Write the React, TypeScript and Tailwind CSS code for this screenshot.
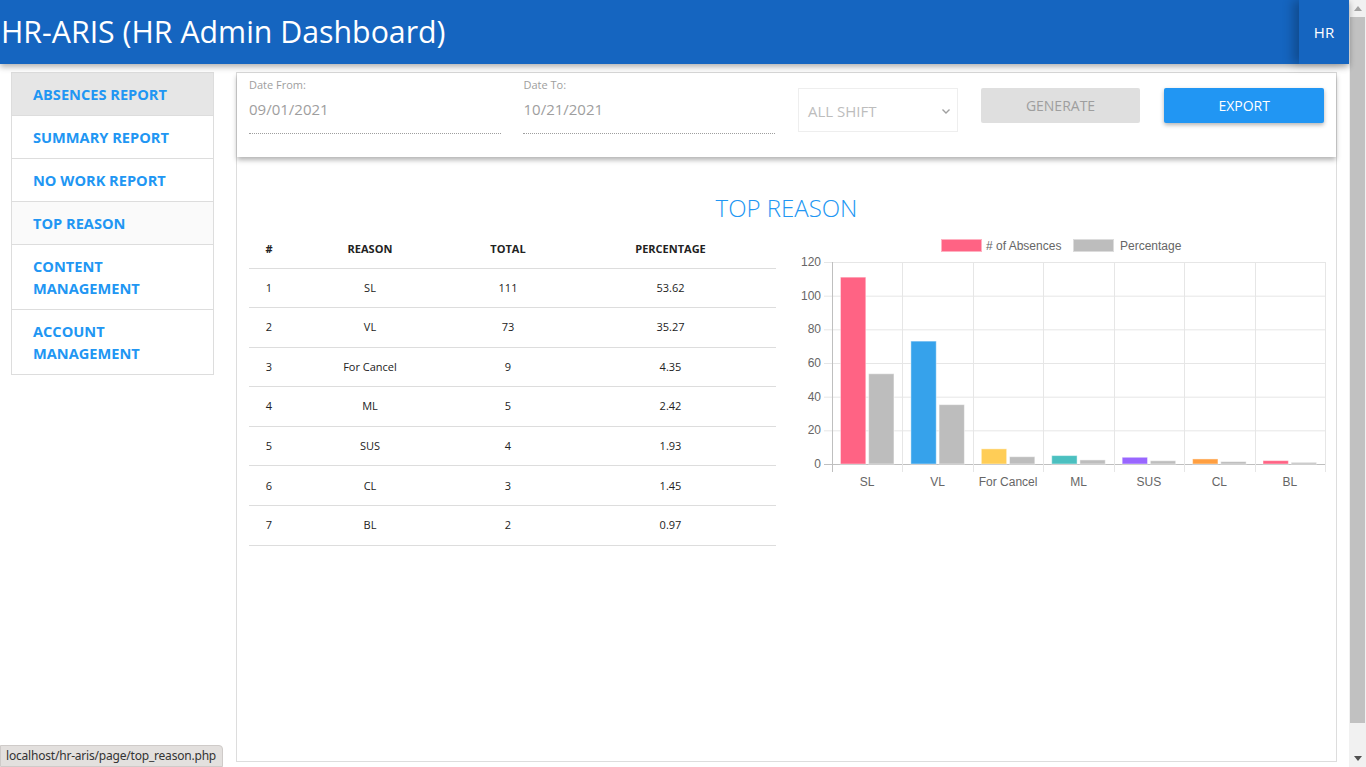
import React from "react";

const menu = [
  { label: "ABSENCES REPORT", bg: "bg-[#e6e6e6]" },
  { label: "SUMMARY REPORT", bg: "bg-white" },
  { label: "NO WORK REPORT", bg: "bg-white" },
  { label: "TOP REASON", bg: "bg-[#fafafa]" },
  { label: "CONTENT MANAGEMENT", bg: "bg-white", wrap: true },
  { label: "ACCOUNT MANAGEMENT", bg: "bg-white", wrap: true },
];

const rows = [
  { reason: "SL", total: 111, pct: 53.62, color: "#ff6384" },
  { reason: "VL", total: 73, pct: 35.27, color: "#36a2eb" },
  { reason: "For Cancel", total: 9, pct: 4.35, color: "#ffcd56" },
  { reason: "ML", total: 5, pct: 2.42, color: "#4bc0c0" },
  { reason: "SUS", total: 4, pct: 1.93, color: "#9966ff" },
  { reason: "CL", total: 3, pct: 1.45, color: "#ff9f40" },
  { reason: "BL", total: 2, pct: 0.97, color: "#ff6384" },
];

function BarChart() {
  // pixel coords copied from page, group shifted back by the svg offset
  const left = 832;
  const right = 1325;
  const top = 262;
  const bottom = 464;
  const cat = (right - left) / rows.length;
  const barW = cat * 0.8 * 0.5 * 0.9;
  const y = (v: number) => bottom - (v * (bottom - top)) / 120;
  const ticks = [0, 20, 40, 60, 80, 100, 120];

  return (
    <svg width={545} height={260} className="block">
      <g transform="translate(-790,-235)" fontFamily="'Liberation Sans', Arial, sans-serif" fontSize={12} fill="#666">
        {/* legend */}
        <rect x={941.5} y={239.5} width={40} height={12} fill="#ff6384" stroke="#ffb1c1" />
        <text x={986} y={249.5}>
          # of Absences
        </text>
        <rect x={1073.5} y={239.5} width={40} height={12} fill="#bdbdbd" stroke="#dcdcdc" />
        <text x={1120} y={249.5}>
          Percentage
        </text>

        {/* grid */}
        {ticks.map((t) => (
          <g key={t}>
            <line x1={824} x2={right} y1={y(t) + 0.5} y2={y(t) + 0.5} stroke={t === 0 ? "#bfbfbf" : "#e6e6e6"} />
            <text x={821} y={y(t) + 4} textAnchor="end">
              {t}
            </text>
          </g>
        ))}
        {rows.map((_, i) => (
          <line
            key={i}
            x1={Math.round(left + cat * i) + 0.5}
            x2={Math.round(left + cat * i) + 0.5}
            y1={top}
            y2={bottom + 8}
            stroke={i === 0 ? "#bfbfbf" : "#e6e6e6"}
          />
        ))}
        <line x1={right + 0.5} x2={right + 0.5} y1={top} y2={bottom + 8} stroke="#e6e6e6" />

        {/* bars */}
        {rows.map((r, i) => {
          const c = left + cat * (i + 0.5);
          const x1 = c - cat * 0.2 - barW / 2;
          const x2 = c + cat * 0.2 - barW / 2;
          return (
            <g key={r.reason}>
              <rect x={x1} y={y(r.total)} width={barW} height={bottom - y(r.total)} fill={r.color} stroke="rgba(255,255,255,0.45)" />
              <rect x={x2} y={y(r.pct)} width={barW} height={bottom - y(r.pct)} fill="#bdbdbd" stroke="rgba(255,255,255,0.5)" />
              <text x={c} y={486} textAnchor="middle">
                {r.reason}
              </text>
            </g>
          );
        })}
      </g>
    </svg>
  );
}

export default function App() {
  return (
    <div className="flex h-[767px] w-[1366px] overflow-hidden bg-white font-['Open_Sans',_'Noto_Sans',_sans-serif]">
      <div className="relative flex w-[1349px] flex-col">
        <header className="relative z-10 flex h-16 shrink-0 items-center justify-between bg-[#1565c0] shadow-[0_3px_6px_rgba(0,0,0,0.3)]">
          <h1 className="pl-[1px] pt-[1px] text-[30.3px] leading-none text-white">HR-ARIS (HR Admin Dashboard)</h1>
          <button className="flex h-16 w-[50px] items-center justify-center bg-[#1565c0] text-[15px] text-white shadow-[-6px_0_10px_rgba(0,0,0,0.25)]">
            HR
          </button>
        </header>

        <div className="flex flex-1 pb-[5px] pl-[11px] pt-2">
          <nav className="w-[203px] self-start border border-[#dddddd]">
            {menu.map((m, i) => (
              <div
                key={m.label}
                className={`${m.bg} ${i > 0 ? "border-t border-[#dddddd]" : ""} ${
                  m.wrap ? "py-[10px] pr-12" : "py-[10px]"
                } pl-[21px] text-[14.6px] font-bold leading-[22px] text-[#2196f3]`}
              >
                {m.label}
              </div>
            ))}
          </nav>

          <main className="ml-[22px] flex w-[1101px] flex-col border border-[#dddddd]">
            <div className="relative z-[1] flex h-[84px] shrink-0 items-start bg-white px-3 pt-[5px] shadow-[0_3px_5px_rgba(0,0,0,0.3)]">
              <div className="w-[253px]">
                <div className="text-[11px] leading-[14px] text-[#9e9e9e]">Date From:</div>
                <div className="flex h-[42px] items-center border-b border-dotted border-[#9e9e9e] pb-[6px] text-[15px] text-[#9e9e9e]">
                  09/01/2021
                </div>
              </div>
              <div className="ml-[22px] w-[252px]">
                <div className="text-[11px] leading-[14px] text-[#9e9e9e]">Date To:</div>
                <div className="flex h-[42px] items-center border-b border-dotted border-[#9e9e9e] pb-[6px] text-[15px] text-[#9e9e9e]">
                  10/21/2021
                </div>
              </div>
              <div className="ml-[23px] mt-[10px] flex h-[44px] w-[160px] items-center justify-between border border-[#eeeeee] pl-[9px] pr-[5px] text-[15px] text-[#bdbdbd]">
                <span className="pt-[2px]">ALL SHIFT</span>
                <svg width="12" height="12" viewBox="0 0 12 12" className="mt-[2px]">
                  <path d="M2.5 4.5 6 8 9.5 4.5" fill="none" stroke="#a0a0a0" strokeWidth="1.4" />
                </svg>
              </div>
              <button className="ml-[23px] mt-[10px] h-[35px] w-[160px] rounded-[2px] bg-[#dfdfdf] text-[14px] text-[#9e9e9e]">
                GENERATE
              </button>
              <button className="ml-[24px] mt-[10px] h-[35px] w-[160px] rounded-[2px] bg-[#2196f3] text-[14px] text-white shadow-[0_2px_4px_rgba(0,0,0,0.3)]">
                EXPORT
              </button>
            </div>

            <h2 className="mt-[35px] text-center text-[24px] font-light leading-[32px] text-[#2196f3]">TOP REASON</h2>

            <div className="mt-[6px] flex px-3">
              <table className="mt-[1px] w-[527px] table-fixed border-collapse self-start text-[11px] text-[#222]">
                <colgroup>
                  <col className="w-[40px]" />
                  <col className="w-[162px]" />
                  <col className="w-[114px]" />
                  <col className="w-[211px]" />
                </colgroup>
                <thead>
                  <tr className="h-[37px] border-b border-[#dddddd]">
                    <th className="text-center font-bold">#</th>
                    <th className="text-center font-bold">REASON</th>
                    <th className="text-center font-bold">TOTAL</th>
                    <th className="text-center font-bold">PERCENTAGE</th>
                  </tr>
                </thead>
                <tbody>
                  {rows.map((r, i) => (
                    <tr key={r.reason} className="h-[39.6px] border-b border-[#dddddd]">
                      <td className="text-center">{i + 1}</td>
                      <td className="text-center">{r.reason}</td>
                      <td className="text-center">{r.total}</td>
                      <td className="text-center">{r.pct.toFixed(2)}</td>
                    </tr>
                  ))}
                </tbody>
              </table>
              <div className="ml-[14px] mt-[5px]">
                <BarChart />
              </div>
            </div>
          </main>
        </div>

        <div className="absolute bottom-0 left-0 flex h-[22px] items-center whitespace-nowrap rounded-tr-[4px] border border-[#cfcbc9] bg-[#e3e0de] pl-[5px] pr-[6px] font-['Noto_Sans',_sans-serif] text-[12px] tracking-[-0.2px] text-[#333]">
          localhost/hr-aris/page/top_reason.php
        </div>
      </div>

      <div className="flex w-[17px] flex-col items-center bg-[#f1f1f1]">
        <div className="flex h-[17px] items-center justify-center">
          <svg width="8" height="5" viewBox="0 0 8 5">
            <path d="M0 5 4 0 8 5Z" fill="#a3a3a3" />
          </svg>
        </div>
        <div className="h-[706px] w-[15px] bg-[#c1c1c1]" />
        <div className="flex-1" />
        <div className="flex h-[17px] items-center justify-center">
          <svg width="8" height="5" viewBox="0 0 8 5">
            <path d="M0 0 4 5 8 0Z" fill="#505050" />
          </svg>
        </div>
      </div>
    </div>
  );
}
